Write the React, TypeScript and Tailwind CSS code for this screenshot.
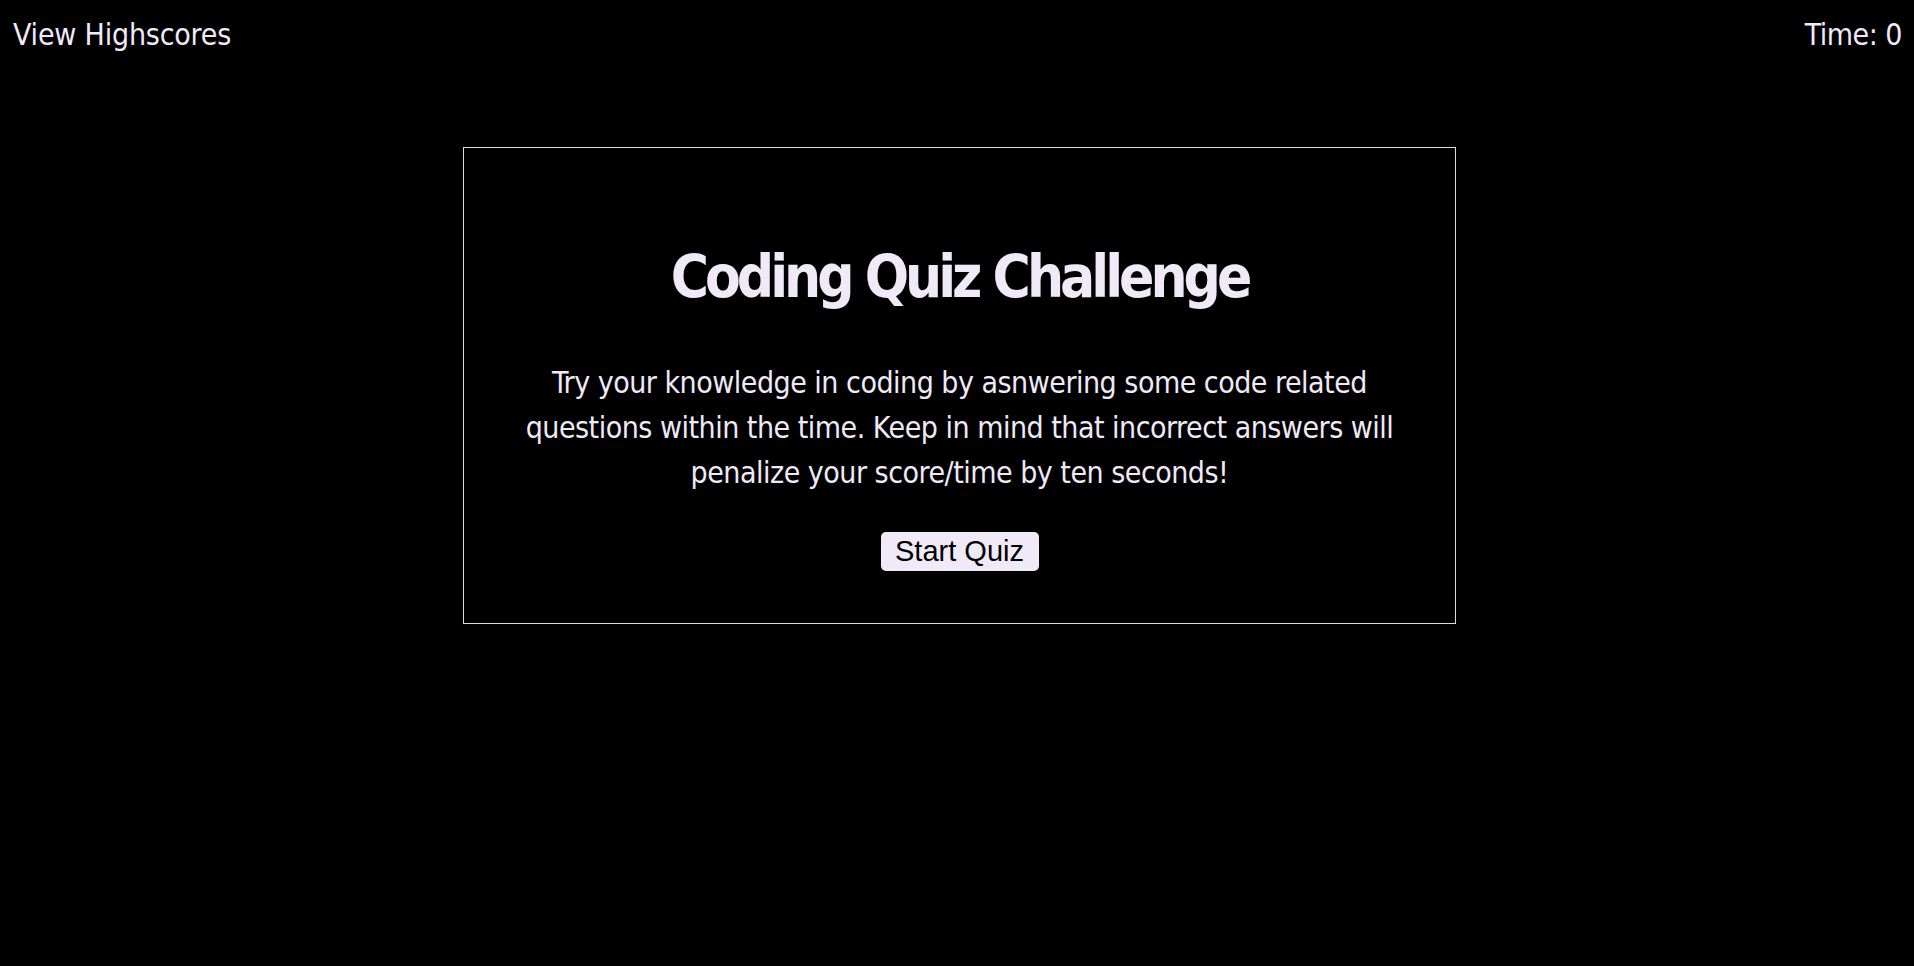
export default function App() {
    return (
        <div className="min-h-[966px] bg-black text-[#efe9f8]" style={{ fontFamily: '"DejaVu Sans Condensed", "DejaVu Sans", sans-serif' }}>
            <header className="flex justify-between pl-[13px] pr-[12px] pt-[20px]">
                <a href="#" className="text-[30px] leading-none tracking-[-0.2px]">View Highscores</a>
                <div className="text-[30px] leading-none tracking-[-0.5px]">Time: 0</div>
            </header>

            <div className="flex justify-center pl-[5px]">
                <main className="mt-[97px] w-[993px] border border-[#dcdcdc] pt-[100px] pb-[52px] text-center">
                    <h1 className="text-[58px] font-bold leading-none tracking-[-4px]">Coding Quiz Challenge</h1>
                    <p className="mt-[54px] text-[30px] leading-[45px] tracking-[-0.5px]">
                        Try your knowledge in coding by asnwering some code related<br />
                        questions within the time. Keep in mind that incorrect answers will<br />
                        penalize your score/time by ten seconds!
                    </p>
                    <button
                        className="mt-[37px] h-[39px] w-[158px] rounded-[5px] bg-[#f0eaf8] text-[29px] leading-none text-black"
                        style={{ fontFamily: '"Liberation Sans", Arial, sans-serif' }}
                    >
                        Start Quiz
                    </button>
                </main>
            </div>
        </div>
    )
}
